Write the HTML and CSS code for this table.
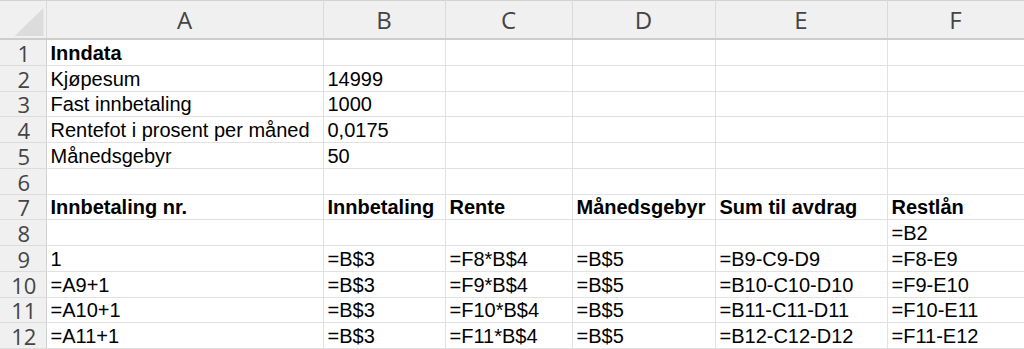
FILE: index.html
```html
<!DOCTYPE html>
<html lang="no">
<head>
  <meta charset="UTF-8" />
  <title>Nedbetalingsplan</title>
  <link rel="stylesheet" href="styles.css">
</head>
<body>

  <table class="sheet">
    <colgroup>
      <col class="col-rownum">
      <col class="col-a">
      <col class="col-b">
      <col class="col-c">
      <col class="col-d">
      <col class="col-e">
      <col class="col-f">
    </colgroup>
    <thead>
      <tr>
        <th class="corner"><span class="corner-mark"></span></th>
        <th>A</th>
        <th>B</th>
        <th>C</th>
        <th>D</th>
        <th>E</th>
        <th>F</th>
      </tr>
    </thead>
    <tbody>
      <tr><th>1</th><td class="bold">Inndata</td><td></td><td></td><td></td><td></td><td></td></tr>
      <tr><th>2</th><td>Kjøpesum</td><td>14999</td><td></td><td></td><td></td><td></td></tr>
      <tr><th>3</th><td>Fast innbetaling</td><td>1000</td><td></td><td></td><td></td><td></td></tr>
      <tr><th>4</th><td>Rentefot i prosent per måned</td><td>0,0175</td><td></td><td></td><td></td><td></td></tr>
      <tr><th>5</th><td>Månedsgebyr</td><td>50</td><td></td><td></td><td></td><td></td></tr>
      <tr><th>6</th><td></td><td></td><td></td><td></td><td></td><td></td></tr>
      <tr class="bold">
        <th>7</th><td>Innbetaling nr.</td><td>Innbetaling</td><td>Rente</td><td>Månedsgebyr</td><td>Sum til avdrag</td><td>Restlån</td>
      </tr>
      <tr><th>8</th><td></td><td></td><td></td><td></td><td></td><td>=B2</td></tr>
      <tr><th>9</th><td>1</td><td>=B$3</td><td>=F8*B$4</td><td>=B$5</td><td>=B9-C9-D9</td><td>=F8-E9</td></tr>
      <tr><th>10</th><td>=A9+1</td><td>=B$3</td><td>=F9*B$4</td><td>=B$5</td><td>=B10-C10-D10</td><td>=F9-E10</td></tr>
      <tr><th>11</th><td>=A10+1</td><td>=B$3</td><td>=F10*B$4</td><td>=B$5</td><td>=B11-C11-D11</td><td>=F10-E11</td></tr>
      <tr><th>12</th><td>=A11+1</td><td>=B$3</td><td>=F11*B$4</td><td>=B$5</td><td>=B12-C12-D12</td><td>=F11-E12</td></tr>
    </tbody>
  </table>

</body>
</html>
```

FILE: styles.css
```css
body {
  margin: 0;
  background-color: #fff;
  overflow: hidden;
}

.sheet {
  border-collapse: collapse;
  table-layout: fixed;
  width: 1024px;
  border-top: 1px solid #d2d2d2;
}

.col-rownum { width: 46px; }
.col-a { width: 277px; }
.col-b { width: 122px; }
.col-c { width: 127px; }
.col-d { width: 143px; }
.col-e { width: 172px; }
.col-f { width: 137px; }

/* Column letters */
thead th {
  height: 37px;
  padding: 0;
  background-color: #f0f0f0;
  border-right: 1px solid #dadada;
  border-bottom: 2px solid #cdcdcd;
  font-family: "Open Sans", "Noto Sans", sans-serif;
  font-weight: normal;
  font-size: 24px;
  line-height: 30px;
  color: #444;
  text-align: center;
  vertical-align: middle;
}

.corner {
  position: relative;
}

.corner-mark {
  position: absolute;
  right: 2px;
  bottom: 2px;
  width: 29px;
  height: 28px;
  background-color: #dcdcdc;
  clip-path: polygon(100% 0, 100% 100%, 0 100%);
}

/* Row numbers */
tbody th {
  height: 24.75px;
  padding: 0 0 0 2px;
  background-color: #f0f0f0;
  border-right: 1px solid #d0d0d0;
  border-bottom: 1px solid #dcdcdc;
  font-family: "Open Sans", "Noto Sans", sans-serif;
  font-weight: normal;
  font-size: 22px;
  line-height: 24px;
  color: #444;
  text-align: center;
  vertical-align: bottom;
}

td {
  padding: 0 4px;
  border-right: 1px solid #e1e1e1;
  border-bottom: 1px solid #e1e1e1;
  font-family: "Liberation Sans", Arial, sans-serif;
  font-size: 20px;
  line-height: 23px;
  color: #000;
  white-space: nowrap;
  overflow: hidden;
  vertical-align: bottom;
}

.bold td,
td.bold {
  font-weight: bold;
}
```
